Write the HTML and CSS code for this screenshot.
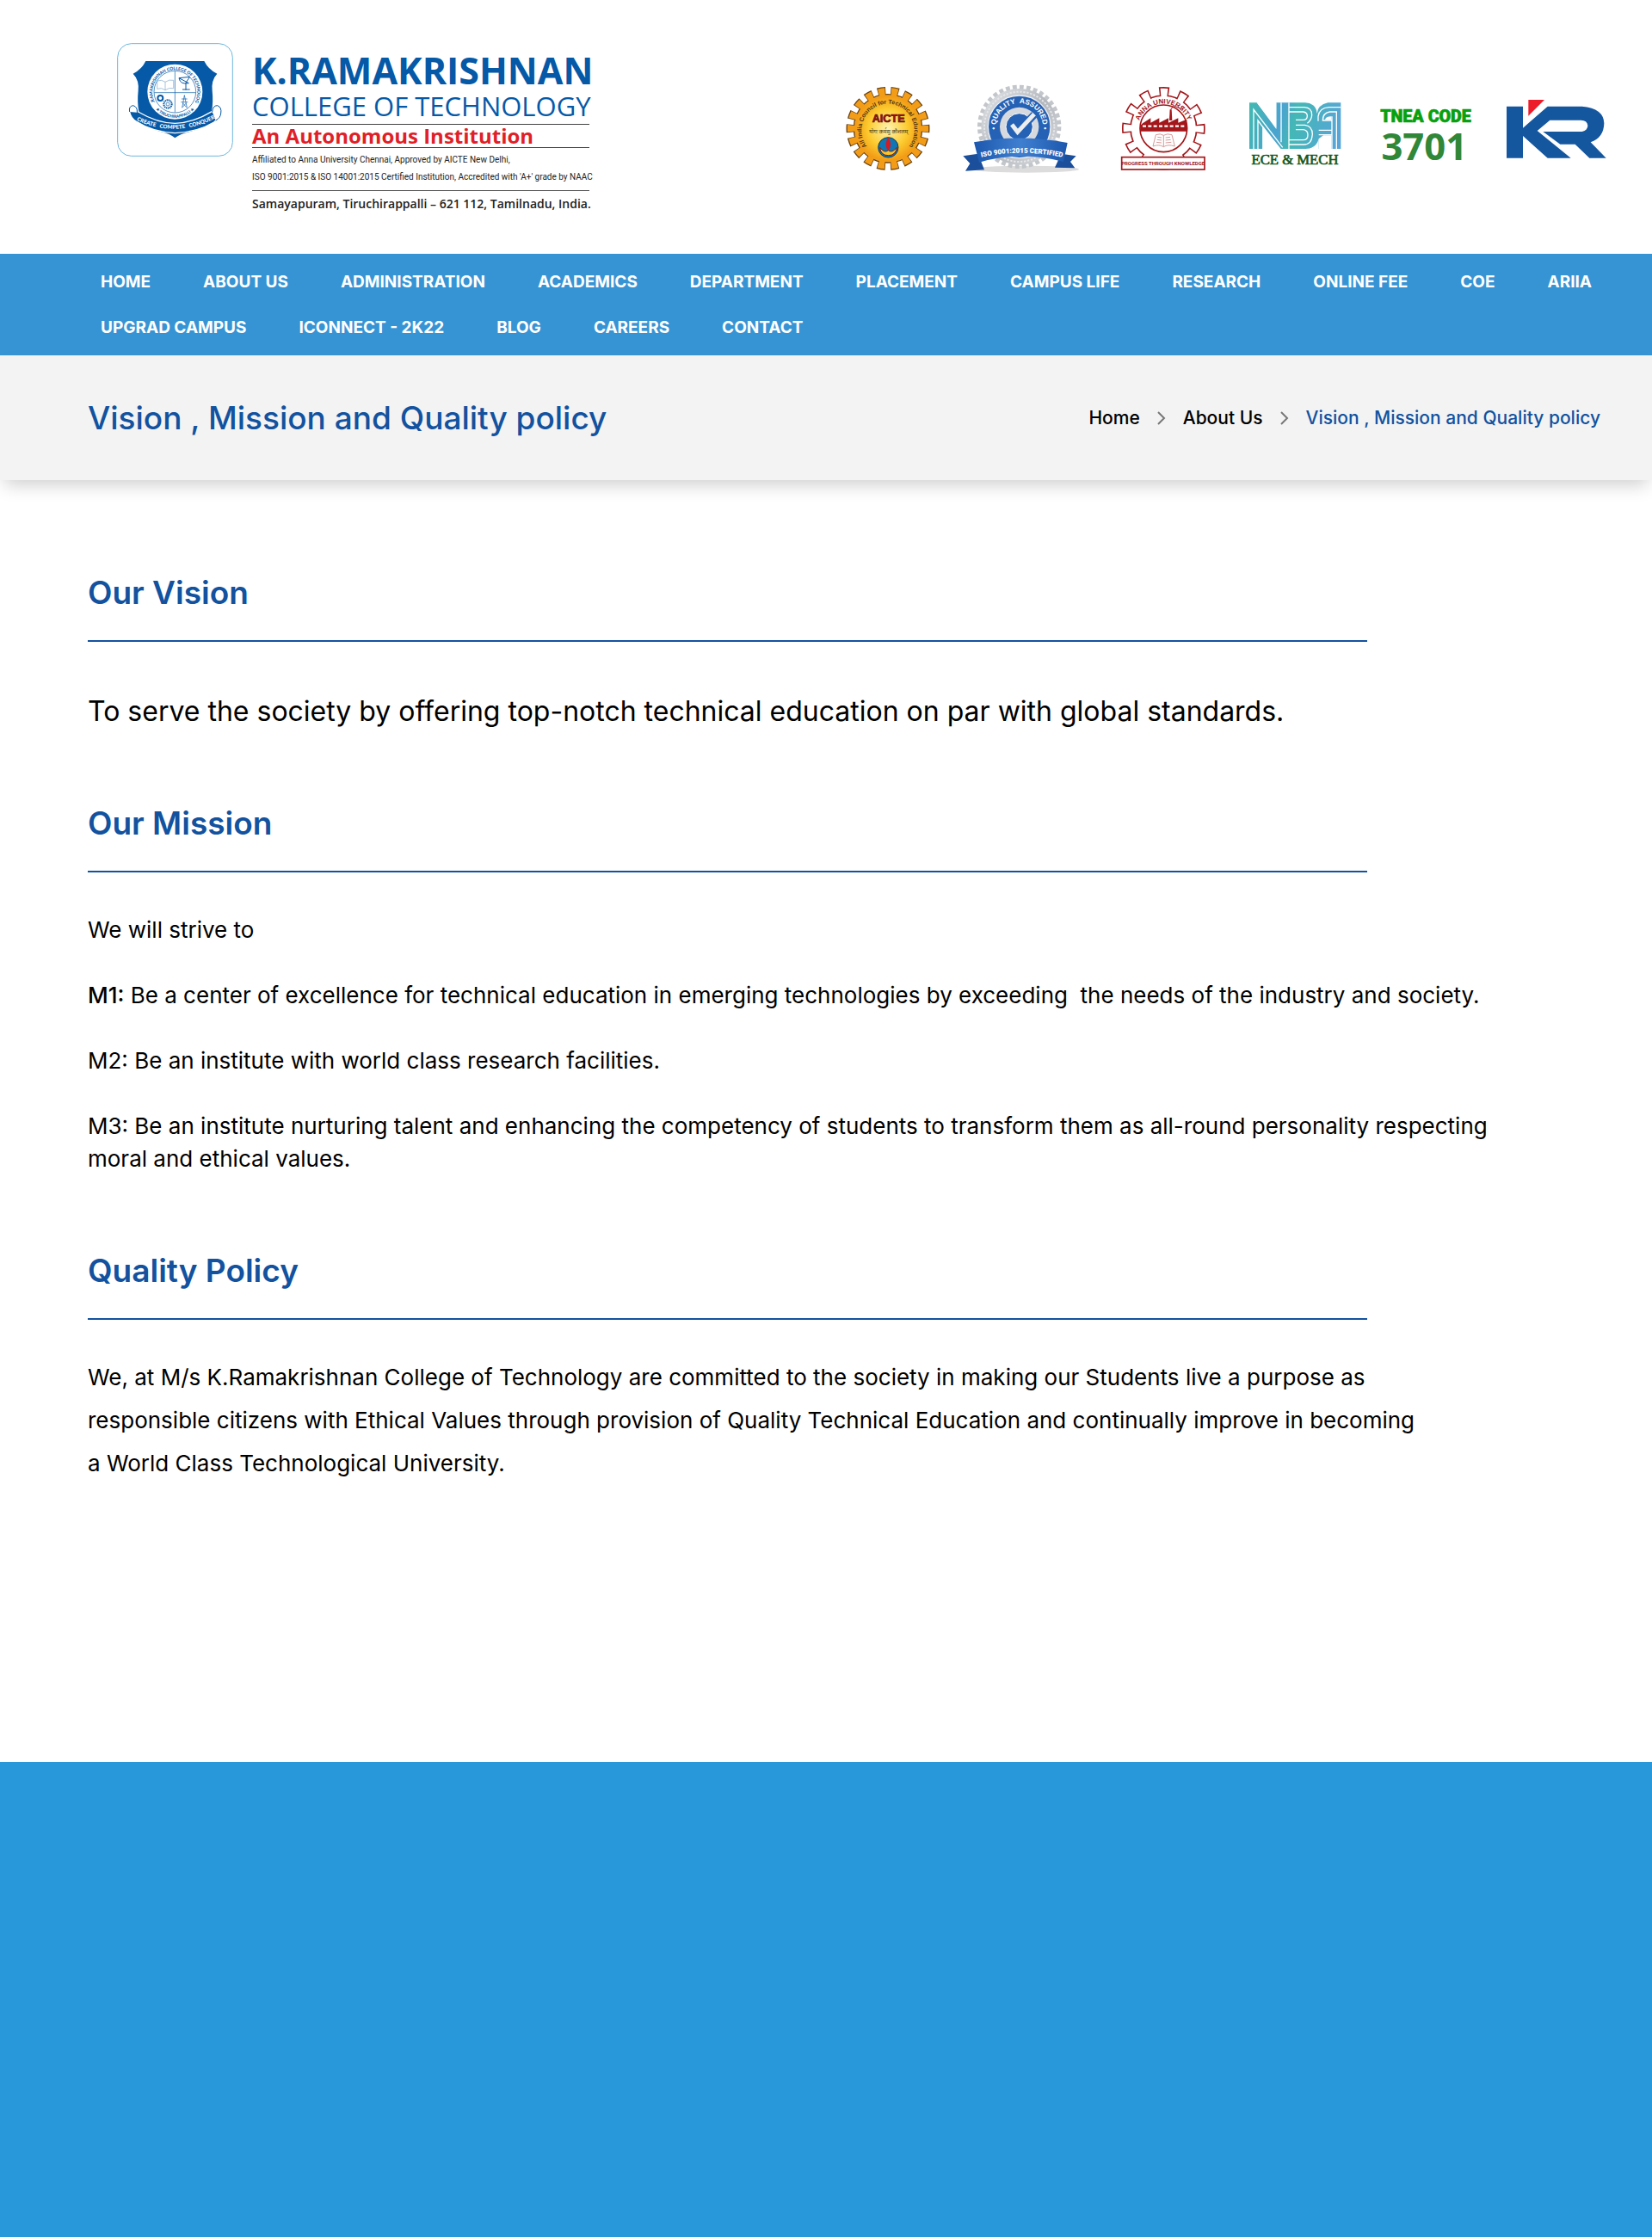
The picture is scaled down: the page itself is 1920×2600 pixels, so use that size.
FILE: index.html
```html
<!DOCTYPE html>
<html lang="en">
<head>
<meta charset="utf-8">
<meta name="viewport" content="width=device-width, initial-scale=1">
<title>Vision, Mission and Quality policy - K.Ramakrishnan College of Technology</title>
<link rel="stylesheet" href="styles.css">
</head>
<body>
<header class="masthead">
  <a class="brand" href="#">
    <svg class="crest" viewBox="48 30 405 396" role="img" aria-label="College crest">
      <defs>
        <path id="crestTop" d="M180 236 A78 78 0 1 1 320 236"/>
        <path id="crestBottom" d="M178 255 A90 90 0 0 0 322 255"/>
        <path id="motto" d="M118 300 Q250 362 388 294"/>
      </defs>
      <rect x="50" y="32" width="401" height="392" rx="48" fill="#fff" stroke="#6bb7dc" stroke-width="3"/>
      <path d="M148 93H352Q366 122 397 137Q376 160 380 196Q384 236 378 270Q366 320 300 340Q270 346 250 361Q232 346 202 340Q136 322 124 270Q118 236 122 196Q126 160 104 137Q134 122 148 93Z" fill="#0559a7"/>
      <circle cx="250" cy="200" r="96" fill="#fff"/>
      <circle cx="250" cy="200" r="73" fill="none" stroke="#0559a7" stroke-width="2"/>
      <g font-family="Lato, sans-serif" font-weight="900" fill="#0559a7" font-size="15">
        <text><textPath href="#crestTop" startOffset="50%" text-anchor="middle">K.RAMAKRISHNAN COLLEGE OF TECHNOLOGY</textPath></text>
        <text font-size="14"><textPath href="#crestBottom" startOffset="50%" text-anchor="middle">★ TIRUCHIRAPPALLI ★</textPath></text>
      </g>
      <path d="M250 128V272M178 203H322" stroke="#0559a7" stroke-width="2"/>
      <g fill="none" stroke="#0559a7" stroke-width="2">
        <path d="M188 162Q204 156 216 166Q230 156 245 160V188Q230 184 216 194Q204 184 188 190ZM216 166V194" stroke="#7ba6cf"/>
        <path d="M264 152Q268 176 298 170ZM264 152L302 148L288 168V194M276 192H302" stroke-width="3"/>
        <circle cx="225" cy="243" r="14" stroke-width="6" stroke-dasharray="4 2"/><circle cx="225" cy="243" r="6"/>
        <path d="M283 212L275 256M283 212L292 256M273 225H293M271 236H295M278 240L290 254M289 240L276 254"/>
      </g>
      <circle cx="199" cy="222" r="9" fill="none" stroke="#0559a7" stroke-width="6"/>
      <path d="M92 270Q88 250 104 248Q120 250 122 270Q190 310 250 310Q314 308 380 268Q382 248 398 248Q414 254 410 276Q408 292 392 300L386 306Q330 340 250 344Q172 340 116 304Q96 292 92 270Z" fill="#0559a7" stroke="#fff" stroke-width="4"/>
      <path d="M92 270Q88 250 104 248Q120 252 118 272M380 270Q382 248 398 248Q414 254 410 276Q408 292 392 300" fill="#fff" stroke="#0559a7" stroke-width="3"/>
      <text font-family="Lato, sans-serif" font-weight="900" fill="#fff" font-size="19"><textPath href="#motto" startOffset="50%" text-anchor="middle">CREATE&#160;&#160; COMPETE&#160;&#160; CONQUER</textPath></text>
    </svg>
    <span class="brand-text">
      <strong class="brand-name">K.RAMAKRISHNAN</strong>
      <span class="brand-college">COLLEGE OF TECHNOLOGY</span>
      <span class="brand-status">An Autonomous Institution</span>
      <span class="brand-note">Affiliated to Anna University Chennai, Approved by AICTE New Delhi,</span>
      <span class="brand-note">ISO 9001:2015 &amp; ISO 14001:2015 Certified Institution, Accredited with 'A+' grade by NAAC</span>
      <span class="brand-address">Samayapuram, Tiruchirappalli – 621 112, Tamilnadu, India.</span>
    </span>
  </a>
  <div class="badges">
    <svg class="badge" width="100" height="102" viewBox="27 30 300 306" role="img" aria-label="AICTE">
      <defs>
        <radialGradient id="gold"><stop offset="0" stop-color="#fff3b0"/><stop offset=".6" stop-color="#fccb2f"/><stop offset="1" stop-color="#f29a15"/></radialGradient>
        <path id="aicteArc" d="M118 246 A92 92 0 1 1 254 246"/>
      </defs>
      <circle cx="186" cy="178" r="130" fill="none" stroke="#6b4210" stroke-width="31" pathLength="360" stroke-dasharray="12 8" stroke-dashoffset="6"/>
      <circle cx="186" cy="178" r="119" fill="#f5a31a" stroke="#6b4210" stroke-width="4"/>
      <circle cx="186" cy="178" r="128" fill="none" stroke="#f39c17" stroke-width="27" pathLength="360" stroke-dasharray="10 10" stroke-dashoffset="5"/>
      <circle cx="186" cy="178" r="114" fill="url(#gold)"/>
      <text font-family="Liberation Sans, sans-serif" font-weight="700" font-size="21" fill="#4a3312"><textPath href="#aicteArc" startOffset="50%" text-anchor="middle">All India Council for Technical Education</textPath></text>
      <text x="188" y="156" text-anchor="middle" font-family="Liberation Sans, sans-serif" font-weight="700" font-size="38" fill="#b01218" stroke="#5a0a0a" stroke-width="2">AICTE</text>
      <text x="188" y="194" text-anchor="middle" font-family="Noto Sans, sans-serif" font-size="19" fill="#4a3312">योगः कर्मसु कौशलम्</text>
      <circle cx="187" cy="244" r="35" fill="#1176b5" stroke="#173c55" stroke-width="3"/>
      <path d="M187 208Q170 238 187 254Q204 238 187 208Z" fill="#d71920"/>
      <path d="M158 244Q174 266 187 254Q200 266 217 244Q214 272 187 272Q160 272 158 244Z" fill="#f6c62b" stroke="#7d1b12" stroke-width="3"/>
    </svg>
    <svg class="badge" width="142" height="102" viewBox="447 30 426 306" role="img" aria-label="ISO 9001:2015 certified">
      <defs>
        <linearGradient id="steel" x2="1" y2="1"><stop offset="0" stop-color="#e3e5e8"/><stop offset=".5" stop-color="#b4b8be"/><stop offset="1" stop-color="#d9dbde"/></linearGradient>
        <linearGradient id="ribbon"><stop offset="0" stop-color="#1c58ae"/><stop offset=".5" stop-color="#3f7fd0"/><stop offset="1" stop-color="#1c58ae"/></linearGradient>
        <path id="isoArc" d="M566 197 A82 82 0 1 1 722 197"/>
        <path id="isoBand" d="M500 281 Q650 245 806 281"/>
      </defs>
      <ellipse cx="668" cy="320" rx="184" ry="12" fill="#dcdcdc"/>
      <circle cx="644" cy="172" r="138" fill="none" stroke="#c3c6ca" stroke-width="16" pathLength="360" stroke-dasharray="6 4"/>
      <circle cx="644" cy="172" r="133" fill="url(#steel)"/>
      <circle cx="644" cy="172" r="122" fill="none" stroke="#e4e6e8" stroke-width="6" stroke-dasharray="7 5"/>
      <circle cx="644" cy="172" r="109" fill="#2562b5" stroke="#eceef0" stroke-width="4"/>
      <text font-family="Liberation Sans, sans-serif" font-weight="700" font-size="25" fill="#fff"><textPath href="#isoArc" startOffset="50%" text-anchor="middle">• QUALITY&#160; ASSURED •</textPath></text>
      <circle cx="644" cy="172" r="68" fill="#d6d9dd"/>
      <circle cx="644" cy="172" r="47" fill="#2562b5" stroke="#fff" stroke-width="3"/>
      <path d="M618 166L638 192L696 130" fill="none" stroke="#2562b5" stroke-width="26"/>
      <path d="M618 164L638 190L696 128" fill="none" stroke="#eceef0" stroke-width="15"/>
      <path d="M448 274L500 266L522 322L456 326L472 300ZM842 274L790 266L768 314L838 316L822 294Z" fill="#1b4f9c"/>
      <path d="M486 226Q644 196 812 228L798 294Q650 254 504 296Z" fill="url(#ribbon)"/>
      <text font-family="Roboto, sans-serif" font-weight="900" font-size="24" fill="#fff"><textPath href="#isoBand" startOffset="50%" text-anchor="middle">ISO 9001:2015 CERTIFIED</textPath></text>
    </svg>
    <svg class="badge" width="104" height="102" viewBox="93 30 312 306" role="img" aria-label="Anna University">
      <defs><path id="annaArc" d="M158 168 A90 90 0 0 1 336 168"/></defs>
      <circle cx="247" cy="178" r="127" fill="none" stroke="#a3161a" stroke-width="36" pathLength="360" stroke-dasharray="15 15" stroke-dashoffset="7"/>
      <circle cx="247" cy="178" r="115" fill="#fff" stroke="#a3161a" stroke-width="5"/>
      <circle cx="247" cy="178" r="123" fill="none" stroke="#fff" stroke-width="34" pathLength="360" stroke-dasharray="11 19" stroke-dashoffset="5"/>
      <text font-family="Liberation Sans, sans-serif" font-weight="700" font-size="24" fill="#a3161a"><textPath href="#annaArc" startOffset="50%" text-anchor="middle">ANNA UNIVERSITY</textPath></text>
      <circle cx="247" cy="178" r="82" fill="#fff" stroke="#a3161a" stroke-width="5"/>
      <path d="M166 188V168L174 160L202 142V158L232 142V158L264 142V158L298 142V158L328 146V188Z" fill="#a3161a"/>
      <path d="M267 150L269 112H275L277 150Z" fill="#a3161a"/>
      <path d="M272 112Q280 96 296 104Q306 112 322 106" fill="none" stroke="#a3161a" stroke-width="3"/>
      <path d="M174 170H326" stroke="#fff" stroke-width="7" stroke-dasharray="12 7"/>
      <path d="M220 200Q236 194 247 202Q260 194 276 200L286 240Q262 232 247 242Q232 232 210 240ZM247 202V242M226 208L240 210M224 217L240 219M222 226L240 228M254 210L270 208M254 219L272 217M254 228L274 226" fill="none" stroke="#d79a9b" stroke-width="3"/>
      <rect x="101" y="278" width="289" height="43" fill="#fff" stroke="#a3161a" stroke-width="5"/>
      <text x="245" y="306" text-anchor="middle" font-family="Roboto, sans-serif" font-weight="700" font-size="18" fill="#a3161a">PROGRESS THROUGH KNOWLEDGE</text>
    </svg>
    <svg class="badge" width="118" height="102" viewBox="525 30 354 306" role="img" aria-label="NBA accredited, ECE and MECH">
      <defs><linearGradient id="nba" gradientUnits="userSpaceOnUse" x1="546" y1="100" x2="865" y2="180"><stop offset="0" stop-color="#42b9b1"/><stop offset=".35" stop-color="#4ba3d0"/><stop offset=".5" stop-color="#43b8b5"/><stop offset="1" stop-color="#58a5d8"/></linearGradient></defs>
      <path d="M546 88H572L640 180V88H740Q780 90 782 126Q784 96 820 88H865V249H788V214Q780 248 742 249H656L592 168V249H546Z" fill="url(#nba)"/>
      <g fill="none" stroke="#fff" stroke-width="4">
        <path d="M561 249V112L662 244M576 249V150L650 249M657 88V226M684 88V249"/>
        <path d="M684 104H738Q764 106 764 130Q764 148 748 160M684 120H734Q748 122 748 134Q748 148 734 148H708M708 166H740Q766 170 766 198Q764 234 736 234H684M708 182H734Q750 184 750 200Q750 218 734 218H684"/>
        <path d="M865 104H824Q790 106 786 136V152M850 249V120H826Q802 124 802 150H834M788 184H834M788 200H834M834 249V136"/>
      </g>
      <path d="M592 249V174L650 249ZM572 88H640V176ZM804 202H832V249H788V214ZM810 148Q812 136 832 136V148Z" fill="#fff"/>
      <text x="705" y="304" text-anchor="middle" font-family="Liberation Serif, serif" font-size="50" fill="#14581c" stroke="#14581c" stroke-width="2">ECE &amp; MECH</text>
    </svg>
    <svg class="badge" width="108" height="102" viewBox="99 30 324 306" role="img" aria-label="TNEA code 3701">
      <text x="261" y="155" text-anchor="middle" font-family="Roboto, sans-serif" font-weight="900" font-size="59" fill="#07a00f" stroke="#07a00f" stroke-width="2">TNEA CODE</text>
      <text x="256" y="287" text-anchor="middle" font-family="Open Sans, sans-serif" font-weight="700" font-size="131" fill="#2f8737">3701</text>
    </svg>
    <svg class="badge" width="116" height="102" viewBox="543 30 348 306" role="img" aria-label="KR">
      <path d="M619 78H675L619 134Z" fill="#ed1c2a"/>
      <path d="M543 101H600V176L686 101H806Q882 108 883 160Q882 210 836 226L890 281H832L782 233H730L670 189H806Q826 184 826 168Q824 149 802 149H694L650 186L767 281H686L600 204V281H543Z" fill="#15579f"/>
    </svg>
  </div>
</header>
<nav class="main-nav" aria-label="Main">
  <ul class="menu">
    <li><a href="#">HOME</a></li>
    <li><a href="#">ABOUT US</a></li>
    <li><a href="#">ADMINISTRATION</a></li>
    <li><a href="#">ACADEMICS</a></li>
    <li><a href="#">DEPARTMENT</a></li>
    <li><a href="#">PLACEMENT</a></li>
    <li><a href="#">CAMPUS LIFE</a></li>
    <li><a href="#">RESEARCH</a></li>
    <li><a href="#">ONLINE FEE</a></li>
    <li><a href="#">COE</a></li>
    <li><a href="#">ARIIA</a></li>
    <li><a href="#">UPGRAD CAMPUS</a></li>
    <li><a href="#">ICONNECT - 2K22</a></li>
    <li><a href="#">BLOG</a></li>
    <li><a href="#">CAREERS</a></li>
    <li><a href="#">CONTACT</a></li>
  </ul>
</nav>
<section class="page-title">
  <h1>Vision , Mission and Quality policy</h1>
  <nav class="breadcrumb" aria-label="Breadcrumb">
    <a href="#">Home</a>
    <svg width="10" height="16" viewBox="0 0 10 16" aria-hidden="true"><path d="M1 1L8 8L1 15" fill="none" stroke="#777" stroke-width="2"/></svg>
    <a href="#">About Us</a>
    <svg width="10" height="16" viewBox="0 0 10 16" aria-hidden="true"><path d="M1 1L8 8L1 15" fill="none" stroke="#777" stroke-width="2"/></svg>
    <span class="current">Vision , Mission and Quality policy</span>
  </nav>
</section>
<main class="content">
  <section>
    <h2>Our Vision</h2>
    <p class="lead">To serve the society by offering top-notch technical education on par with global standards.</p>
  </section>
  <section class="mission">
    <h2>Our Mission</h2>
    <p>We will strive to</p>
    <p><strong>M1:</strong> Be a center of excellence for technical education in emerging technologies by exceeding &nbsp;the needs of the industry and society.</p>
    <p>M2: Be an institute with world class research facilities.</p>
    <p>M3: Be an institute nurturing talent and enhancing the competency of students to transform them as all-round personality respecting moral and ethical values.</p>
  </section>
  <section class="policy">
    <h2>Quality Policy</h2>
    <p>We, at M/s K.Ramakrishnan College of Technology are committed to the society in making our Students live a purpose as responsible citizens with Ethical Values through provision of Quality Technical Education and continually improve in becoming a World Class Technological University.</p>
  </section>
</main>
<footer class="footer"></footer>
</body>
</html>
```

FILE: styles.css
```css
* {
  box-sizing: border-box;
}

body {
  display: flex;
  flex-direction: column;
  min-height: 100vh;
  margin: 0;
  background: #fff;
  color: #000;
  font-family: Inter, "Open Sans", sans-serif;
}

a {
  color: inherit;
  text-decoration: none;
}

h1, h2, p, ul {
  margin: 0;
  padding: 0;
}

.masthead {
  display: flex;
  justify-content: space-between;
  align-items: flex-start;
  padding: 50px 53px 43px 136px;
}

.brand {
  display: flex;
  gap: 22px;
}

.crest {
  flex: none;
  width: 135px;
  height: 132px;
}

.brand-text {
  display: flex;
  flex-direction: column;
  width: 396px;
  color: #222;
  white-space: nowrap;
  font-family: "Open Sans", sans-serif;
}

.brand-name {
  padding-top: 8px;
  color: #0559a7;
  font-size: 43px;
  line-height: 48px;
}

.brand-college {
  color: #0559a7;
  font-size: 31px;
  font-weight: 500;
  line-height: 34px;
}

.brand-status {
  margin: 4px 4px 4px 0;
  border: solid #444;
  border-width: 1px 0;
  color: #e01f28;
  font-size: 24px;
  font-weight: 700;
  line-height: 26px;
}

.brand-note {
  font-family: Roboto, sans-serif;
  font-size: 10px;
  font-weight: 400;
  line-height: 20px;
}

.brand-address {
  margin: 5px 4px 0 0;
  border-top: 1px solid #555;
  font-size: 14px;
  font-weight: 600;
  line-height: 30px;
}

.badges {
  display: flex;
  gap: 40px;
  padding-top: 50px;
}

.badge {
  flex: none;
  overflow: visible;
}

.main-nav {
  padding: 6px 60px 6px 117px;
  background: #3794d4;
  color: #fff;
}

.menu {
  display: flex;
  flex-wrap: wrap;
  column-gap: 61px;
  list-style: none;
  font-size: 19px;
  font-weight: 700;
  line-height: 53px;
}

.page-title {
  display: flex;
  justify-content: space-between;
  align-items: center;
  min-height: 145px;
  padding: 0 60px 0 102px;
  background: #f3f3f3;
  box-shadow: 0 10px 20px -5px rgba(0, 0, 0, .2);
}

.page-title h1 {
  color: #12529f;
  font-size: 37px;
  font-weight: 500;
}

.breadcrumb {
  display: flex;
  align-items: center;
  gap: 20px;
  font-size: 21px;
  font-weight: 500;
}

.breadcrumb .current {
  color: #12529f;
}

.content {
  padding: 100px 102px 322px;
  font-size: 26px;
  line-height: 38px;
}

.content h2 {
  max-width: 1487px;
  margin-bottom: 10px;
  padding: 4px 0 28px;
  border-bottom: 2px solid #12529f;
  color: #12529f;
  font-size: 37px;
  font-weight: 600;
  line-height: 54px;
}

.content .lead {
  padding: 40px 0 68px;
  font-size: 32px;
  line-height: 62px;
}

.content strong {
  font-weight: 500;
}

.mission {
  max-width: 1690px;
  padding-bottom: 80px;
}

.mission p {
  padding-top: 38px;
}

.policy p {
  max-width: 1555px;
  padding-top: 32px;
  line-height: 50px;
}

.footer {
  flex: 1;
  background: #2898db;
}
```
